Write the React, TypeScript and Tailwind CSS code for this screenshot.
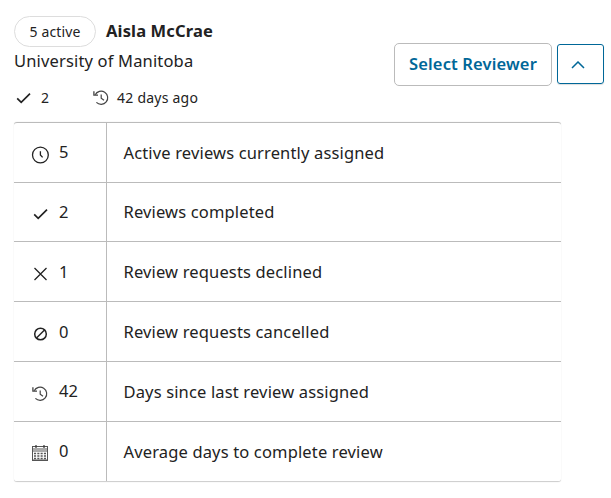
import type { ReactNode } from 'react';

type IconProps = { className?: string };

function Check({ className = '' }: IconProps) {
  return (
    <svg className={`size-[18px] ${className}`} viewBox="0 0 18 18" fill="none" stroke="#222" strokeWidth="1.7">
      <path d="M3.2 9.4 7.2 13.4 16 4.6" />
    </svg>
  );
}

function History({ className = '' }: IconProps) {
  return (
    <svg className={`size-[18px] ${className}`} viewBox="0 0 18 18" fill="none" stroke="#444">
      <path d="M3.2 5.8A6.6 6.6 0 1 1 4.4 13.4" strokeWidth="1.2" />
      <path d="M1.9 2.2V6.2H6" strokeWidth="1.3" />
      <path d="M9.2 5.5V9.2L12 11.3" strokeWidth="1.2" />
    </svg>
  );
}

function Clock({ className = '' }: IconProps) {
  return (
    <svg className={`size-[18px] ${className}`} viewBox="0 0 18 18" fill="none" stroke="#222" strokeWidth="1.3">
      <circle cx="9.4" cy="9" r="7.9" />
      <path d="M9.4 5.2V9L11.6 11.4" />
    </svg>
  );
}

function Cross({ className = '' }: IconProps) {
  return (
    <svg className={`size-[18px] ${className}`} viewBox="0 0 18 18" fill="none" stroke="#222" strokeWidth="1.3">
      <path d="M3.5 3 15.5 15M15.5 3 3.5 15" />
    </svg>
  );
}

function Ban({ className = '' }: IconProps) {
  return (
    <svg className={`size-[18px] ${className}`} viewBox="0 0 18 18" fill="none" stroke="#222" strokeWidth="1.5">
      <circle cx="9.5" cy="9" r="5.8" />
      <path d="M5.5 13 13.5 5" />
    </svg>
  );
}

function Calendar({ className = '' }: IconProps) {
  return (
    <svg className={`size-[18px] ${className}`} viewBox="0 0 18 18" fill="none">
      <rect x="1.5" y="1.5" width="15" height="14" stroke="#555" />
      <path d="M2 4.5H16" stroke="#aaa" strokeWidth="3" />
      <path d="M5 0V3M13 0V3" stroke="#333" strokeWidth="1.2" />
      <path d="M2 6.5H16M2 14.5H16" stroke="#aaa" />
      <path d="M3 8.5H15M3 11H15M3 13.5H15" stroke="#555" strokeWidth="1.3" strokeDasharray="2.1 1.2" />
    </svg>
  );
}

type Row = { icon: ReactNode; value: number; label: string; height: string; valuePad?: string };

const rows: Row[] = [
  { icon: <Clock />, value: 5, label: 'Active reviews currently assigned', height: 'h-[60px]', valuePad: 'pb-px' },
  { icon: <Check />, value: 2, label: 'Reviews completed', height: 'h-[59px]' },
  { icon: <Cross />, value: 1, label: 'Review requests declined', height: 'h-[60px]' },
  { icon: <Ban />, value: 0, label: 'Review requests cancelled', height: 'h-[60px]' },
  { icon: <History />, value: 42, label: 'Days since last review assigned', height: 'h-[60px]', valuePad: 'pb-px' },
  { icon: <Calendar />, value: 0, label: 'Average days to complete review', height: 'h-[60px]', valuePad: 'pb-px' },
];

export default function App() {
  return (
    <main className="h-[498px] w-[611px] overflow-hidden bg-white pl-3.5 font-['Noto_Sans',sans-serif] text-[#222]">
      <header className="flex h-[122px] pt-4">
        <div className="w-[380px] shrink-0">
          <div className="flex h-[31px] items-center">
            <span className="flex h-[31px] w-[82px] items-center justify-center rounded-full border border-[#ddd] text-sm tracking-[0.12px]">
              5 active
            </span>
            <h1 className="ml-2.5 pb-0.5 text-[16.5px] leading-6 font-bold tracking-[0.15px]">Aisla McCrae</h1>
          </div>
          <p className="h-7 text-[16.5px] leading-7 tracking-[0.16px]">University of Manitoba</p>
          <div className="mt-[13px] flex h-5 items-center text-sm">
            <Check />
            <span className="ml-[9px] w-[42px]">2</span>
            <History className="ml-[9px]" />
            <span className="ml-[7px] tracking-[0.24px]">42 days ago</span>
          </div>
        </div>
        <div className="mt-[27px] flex h-[43px] items-start gap-[5px]">
          <button className="h-[43px] w-[158px] rounded-[5px] border border-[#bbb] pb-0.5 text-[16.5px] leading-6 font-semibold tracking-[0.14px] whitespace-nowrap text-[#006798]">
            Select Reviewer
          </button>
          <button
            className="mt-px flex h-10 w-[47px] items-center justify-center rounded-[3px] border border-[#006798] shadow-[0_1px_1px_#ddd]"
            aria-label="Collapse"
          >
            <svg className="mt-px mr-[5px] h-2 w-3.5" viewBox="0 0 14 8" fill="none" stroke="#006798" strokeWidth="1.5">
              <path d="M1 7 7 1 13 7" />
            </svg>
          </button>
        </div>
      </header>
      <section className="w-[547px] rounded-[3px] border-t border-[#bbb] text-[16.5px] leading-6 shadow-[0_0_1px_#ccc]">
        {rows.map((row) => (
          <div key={row.label} className={`flex border-b border-[#bbb] last:rounded-b-[3px] last:border-[#d0d0d0] ${row.height}`}>
            <div className="flex w-[93px] items-center border-r border-[#bbb] pl-[17px]">
              <span className="mt-1">{row.icon}</span>
              <span className={`ml-2.5 ${row.valuePad ?? ''}`}>{row.value}</span>
            </div>
            <div className="flex items-center pl-[16.5px] tracking-[0.15px]">{row.label}</div>
          </div>
        ))}
      </section>
    </main>
  );
}
